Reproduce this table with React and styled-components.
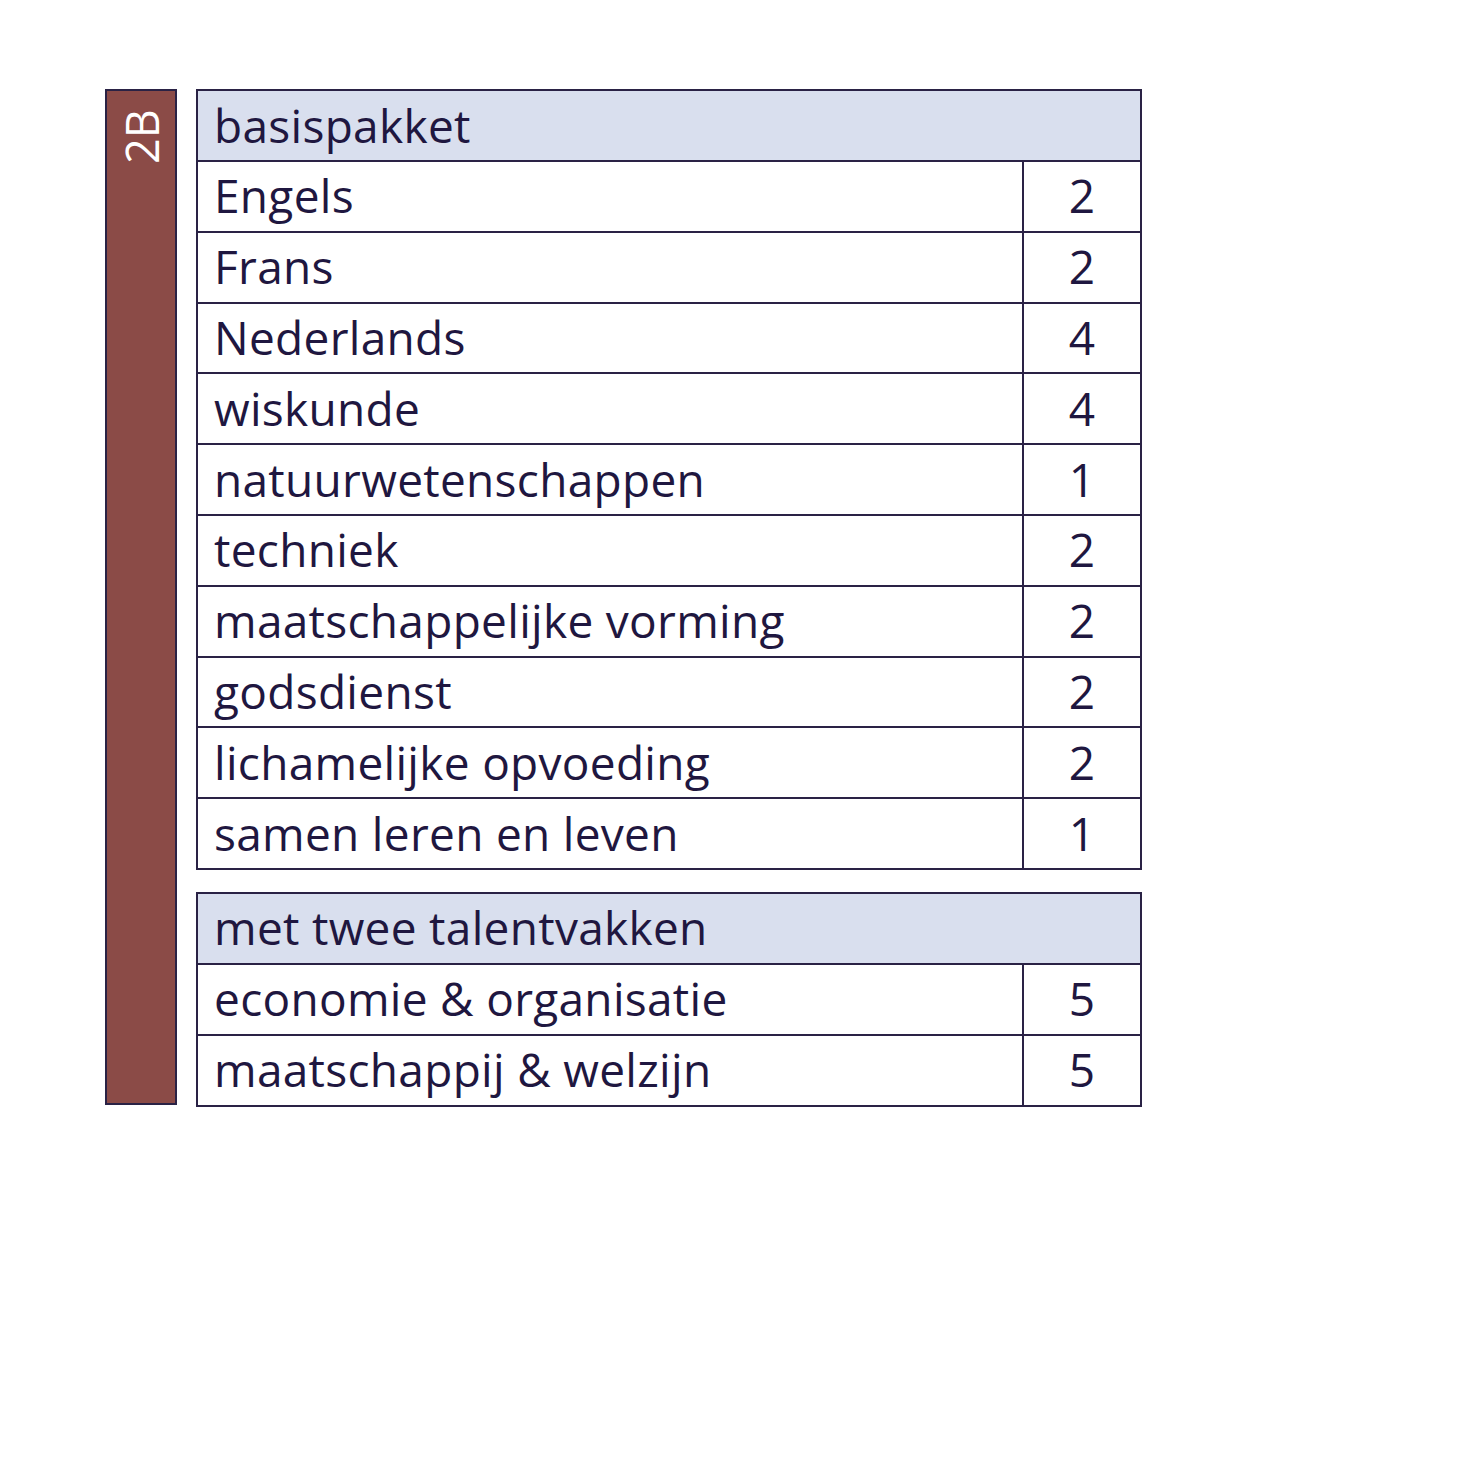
import React from "react";
import styled, { createGlobalStyle } from "styled-components";

const Global = createGlobalStyle`
  html, body { margin: 0; padding: 0; background: #ffffff; }
  body { font-family: "Open Sans", "Noto Sans", sans-serif; color: #1f1740; }
`;

const Page = styled.div`
  width: 1478px;
  height: 1478px;
  box-sizing: border-box;
  padding: 89px 0 0 105px;
  display: flex;
  align-items: flex-start;
  gap: 19px;
`;

const SideBar = styled.div`
  width: 72px;
  height: 1016px;
  box-sizing: border-box;
  background: #8b4b47;
  border: 2px solid #2a2245;
  display: flex;
  justify-content: center;
  padding-top: 15px;
`;

const SideLabel = styled.div`
  writing-mode: vertical-rl;
  transform: rotate(180deg);
  color: #ffffff;
  font-size: 45px;
  line-height: 1;
  height: 58px;
  font-weight: 400;
`;

const Column = styled.div`
  width: 946px;
  display: flex;
  flex-direction: column;
  gap: 22px;
`;

const Table = styled.div`
  border: 2px solid #2a2245;
  display: flex;
  flex-direction: column;
`;

const Row = styled.div`
  height: 69px;
  box-sizing: border-box;
  display: flex;
  background: ${(p) => (p.$header ? "#d9dfee" : "#ffffff")};
  & + & {
    height: 70.8px;
    border-top: 2px solid #2a2245;
  }
`;

const Name = styled.div`
  flex: 1;
  display: flex;
  align-items: center;
  padding-left: 16px;
  font-size: 46px;
  letter-spacing: 0.3px;
  white-space: nowrap;
  padding-bottom: 2px;
`;

const Value = styled.div`
  width: 116px;
  border-left: 2px solid #2a2245;
  display: flex;
  align-items: center;
  justify-content: center;
  font-size: 46px;
  padding-bottom: 2px;
`;

const basis = [
  ["Engels", 2],
  ["Frans", 2],
  ["Nederlands", 4],
  ["wiskunde", 4],
  ["natuurwetenschappen", 1],
  ["techniek", 2],
  ["maatschappelijke vorming", 2],
  ["godsdienst", 2],
  ["lichamelijke opvoeding", 2],
  ["samen leren en leven", 1],
];

const talent = [
  ["economie & organisatie", 5],
  ["maatschappij & welzijn", 5],
];

function Block({ title, rows }) {
  return (
    <Table>
      <Row $header>
        <Name>{title}</Name>
      </Row>
      {rows.map(([n, v]) => (
        <Row key={n}>
          <Name>{n}</Name>
          <Value>{v}</Value>
        </Row>
      ))}
    </Table>
  );
}

export default function App() {
  return (
    <>
      <Global />
      <Page>
        <SideBar>
          <SideLabel>2B</SideLabel>
        </SideBar>
        <Column>
          <Block title="basispakket" rows={basis} />
          <Block title="met twee talentvakken" rows={talent} />
        </Column>
      </Page>
    </>
  );
}
